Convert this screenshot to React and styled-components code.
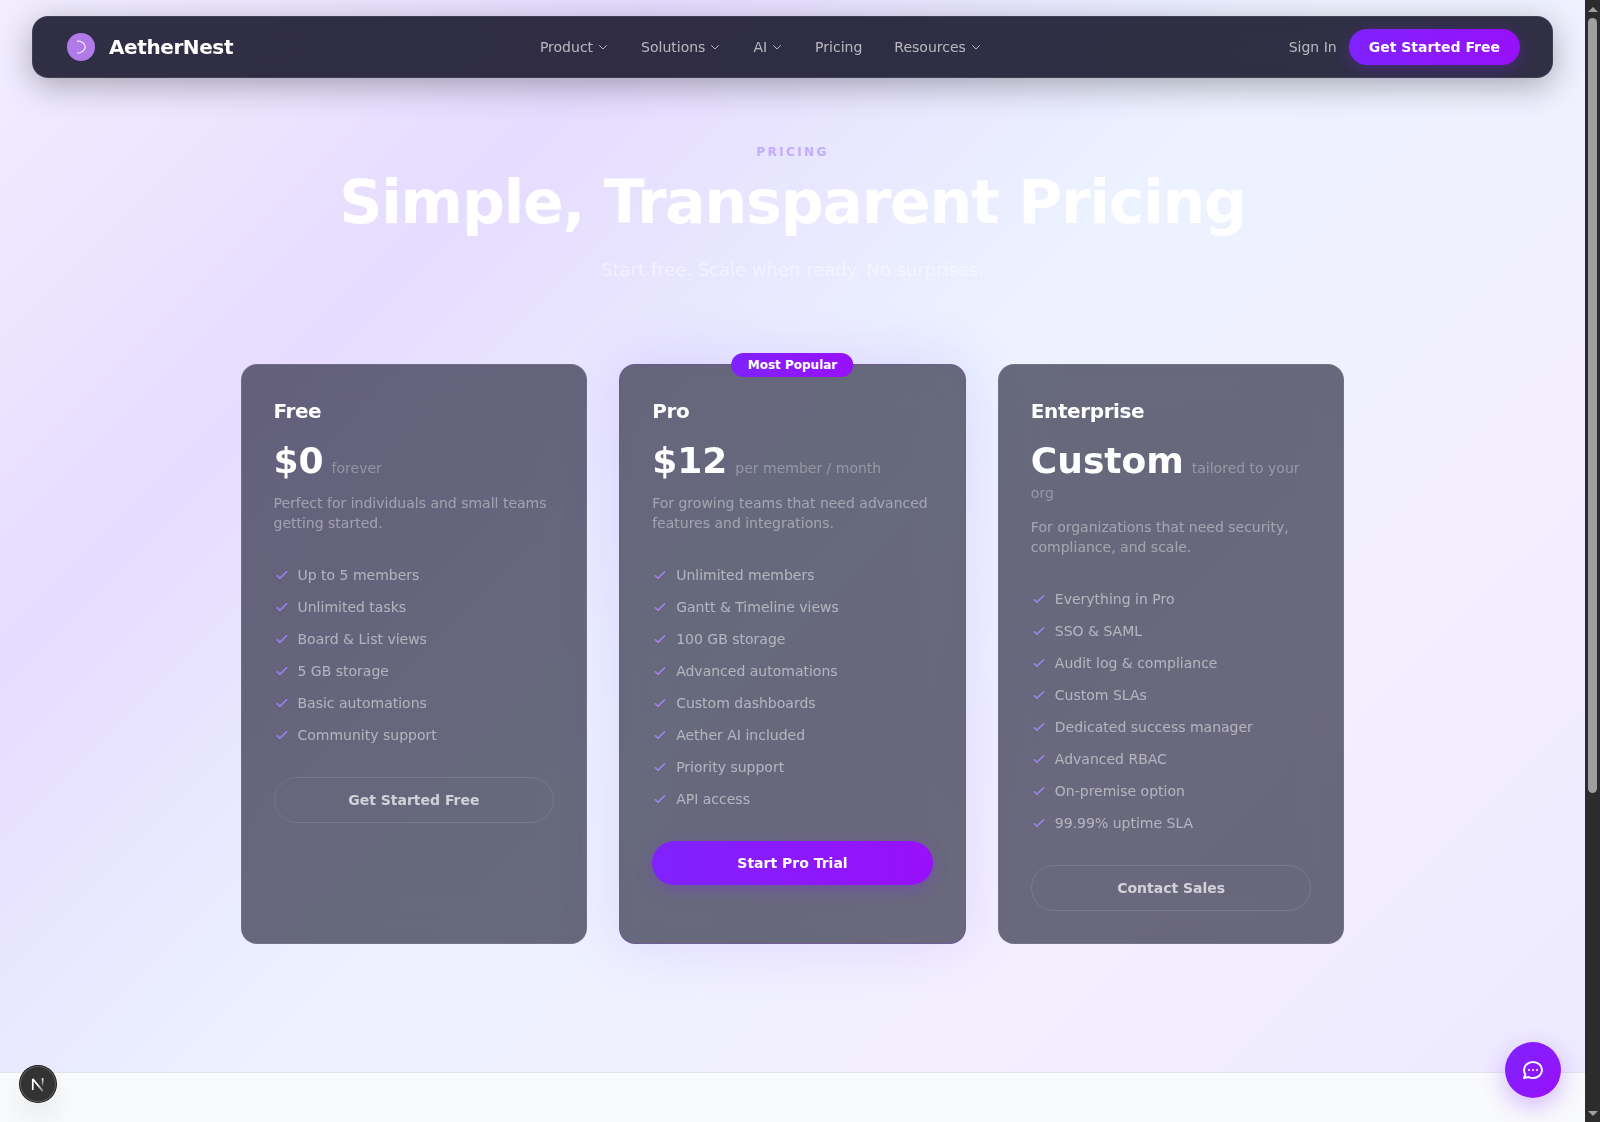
import React from "react";
import styled, { createGlobalStyle, css } from "styled-components";

const GlobalStyle = createGlobalStyle`
  * {
    box-sizing: border-box;
  }

  body {
    margin: 0;
    font-family: "DejaVu Sans", sans-serif;
    font-size: 16px;
    line-height: 24px;
    color: #fff;
  }

  h1, h2, p, ul {
    margin: 0;
    padding: 0;
  }

  ul {
    list-style: none;
  }

  a {
    color: inherit;
    text-decoration: none;
  }

  button {
    font-family: inherit;
    border: none;
    cursor: pointer;
  }
`;

const Shell = styled.div`
  display: flex;
  height: 100vh;
  overflow: hidden;
`;

const Page = styled.div`
  flex: 1;
  min-width: 0;
  display: flex;
  flex-direction: column;
`;

const Hero = styled.main`
  padding: 16px 32px 128px;
  background: linear-gradient(
    135deg,
    #f2eeff 0%,
    #e6dcff 25%,
    #ecf2ff 50%,
    #f4efff 75%,
    #edeaff 100%
  );
`;

const gradient = css`
  background: linear-gradient(90deg, #7f22fe, #9810fa);
`;

const NavBar = styled.header`
  display: flex;
  align-items: center;
  justify-content: space-between;
  padding: 12px 32px;
  border: 1px solid rgba(255, 255, 255, 0.08);
  border-radius: 16px;
  background: rgba(14, 13, 35, 0.85);
  backdrop-filter: blur(20px);
  box-shadow: 0 8px 32px rgba(0, 0, 0, 0.3);
`;

const Brand = styled.a`
  display: flex;
  align-items: center;
  gap: 12px;
  font-size: 20px;
  font-weight: 700;
  line-height: 28px;
  letter-spacing: -0.02em;
`;

const NavLinks = styled.nav`
  display: flex;
  align-items: center;
  gap: 32px;
`;

const NavItem = styled.button`
  display: flex;
  align-items: center;
  gap: 4px;
  padding: 0;
  background: none;
  font-size: 14px;
  line-height: 20px;
  color: rgba(255, 255, 255, 0.65);
`;

const NavActions = styled.div`
  display: flex;
  align-items: center;
  gap: 12px;
`;

const NavLink = styled.a`
  font-size: 14px;
  line-height: 20px;
  color: rgba(255, 255, 255, 0.65);
`;

const NavCta = styled.button`
  ${gradient}
  padding: 8px 20px;
  border-radius: 18px;
  font-size: 14px;
  font-weight: 600;
  line-height: 20px;
  color: #fff;
  box-shadow: 0 4px 16px rgba(127, 34, 254, 0.3);
`;

const Intro = styled.div`
  padding-top: 66px;
  text-align: center;
`;

const Eyebrow = styled.p`
  margin-bottom: 12px;
  font-size: 12px;
  font-weight: 600;
  line-height: 16px;
  letter-spacing: 0.2em;
  text-transform: uppercase;
  color: #c2adff;
`;

const Heading = styled.h1`
  margin-bottom: 24px;
  font-size: 60px;
  font-weight: 700;
  line-height: 60px;
  letter-spacing: -0.02em;
`;

const Subheading = styled.p`
  font-size: 18px;
  line-height: 28px;
  color: rgba(255, 255, 255, 0.5);
`;

const Plans = styled.section`
  display: grid;
  grid-template-columns: repeat(3, 1fr);
  gap: 32px;
  max-width: 1104px;
  margin: 80px auto 0;
`;

const PlanCard = styled.article`
  position: relative;
  padding: 32px;
  border: 1px solid
    ${({ $popular }) =>
      $popular ? "rgba(127, 34, 254, 0.2)" : "rgba(255, 255, 255, 0.08)"};
  border-radius: 16px;
  background: rgba(14, 14, 36, 0.6);
  backdrop-filter: blur(20px);
  box-shadow: ${({ $popular }) =>
    $popular ? "0 0 60px rgba(124, 58, 255, 0.15)" : "none"};
`;

const Badge = styled.span`
  ${gradient}
  position: absolute;
  top: -12px;
  left: 50%;
  transform: translateX(-50%);
  padding: 4px 16px;
  border-radius: 12px;
  font-size: 12px;
  font-weight: 600;
  line-height: 16px;
  white-space: nowrap;
`;

const PlanName = styled.h2`
  margin-bottom: 16px;
  font-size: 20px;
  font-weight: 700;
  line-height: 28px;
  letter-spacing: -0.02em;
`;

const Price = styled.div`
  margin-bottom: 12px;
`;

const Amount = styled.span`
  font-size: 36px;
  font-weight: 700;
  line-height: 40px;
`;

const Period = styled.span`
  margin-left: 8px;
  font-size: 14px;
  line-height: 20px;
  color: rgba(255, 255, 255, 0.3);
`;

const PlanText = styled.p`
  margin-bottom: 32px;
  font-size: 14px;
  line-height: 20px;
  color: rgba(255, 255, 255, 0.4);
`;

const Features = styled.ul`
  display: flex;
  flex-direction: column;
  gap: 12px;
  margin-bottom: 32px;
`;

const Feature = styled.li`
  display: flex;
  align-items: center;
  gap: 8px;
  font-size: 14px;
  line-height: 20px;
  color: rgba(255, 255, 255, 0.5);

  svg {
    flex-shrink: 0;
    color: #a684ff;
  }
`;

const PlanButton = styled.button`
  display: block;
  width: 100%;
  padding: 12px;
  border-radius: 24px;
  font-size: 14px;
  font-weight: 600;
  line-height: 20px;

  ${({ $primary }) =>
    $primary
      ? css`
          ${gradient}
          color: #fff;
          box-shadow: 0 4px 16px rgba(127, 34, 254, 0.3);
        `
      : css`
          background: none;
          border: 1px solid rgba(255, 255, 255, 0.1);
          color: rgba(255, 255, 255, 0.7);
        `}
`;

const Footer = styled.footer`
  flex: 1;
  border-top: 1px solid #e2e4ea;
  background: #f9fafc;
`;

const ChatButton = styled.button`
  position: fixed;
  right: 39px;
  bottom: 24px;
  display: flex;
  align-items: center;
  justify-content: center;
  width: 56px;
  height: 56px;
  padding: 0;
  border-radius: 50%;
  background: linear-gradient(135deg, #7f22fe, #9810fa);
  color: #fff;
  box-shadow: 0 8px 24px rgba(127, 34, 254, 0.3);
`;

const DevButton = styled.button`
  position: fixed;
  left: 20px;
  bottom: 20px;
  width: 36px;
  height: 36px;
  padding: 0;
  border-radius: 50%;
  background: #333;
  box-shadow: 0 0 0 1px #171717, inset 0 0 0 1px #5c5c5c,
    0 16px 32px -8px rgba(0, 0, 0, 0.24);

  svg {
    display: block;
  }
`;

const ScrollRail = styled.div`
  display: flex;
  flex-direction: column;
  width: 15px;
  background: #2c2c2c;
`;

const ScrollArrow = styled.div`
  display: flex;
  align-items: center;
  justify-content: center;
  height: 18px;

  &::before {
    content: "";
    border: 5px solid transparent;
    border-width: ${({ $up }) => ($up ? "0 5px 5px" : "5px 5px 0")};
    border-color: ${({ $up }) =>
      $up ? "transparent transparent #9f9f9f" : "#9f9f9f transparent transparent"};
  }
`;

const ScrollTrack = styled.div`
  flex: 1;
  padding: 0 3px;
`;

const ScrollThumb = styled.div`
  height: 71.4%;
  border-radius: 5px;
  background: #9f9f9f;
`;

const navItems = [
  { label: "Product", menu: true },
  { label: "Solutions", menu: true },
  { label: "AI", menu: true },
  { label: "Pricing" },
  { label: "Resources", menu: true },
];

const plans = [
  {
    name: "Free",
    price: "$0",
    period: "forever",
    text: "Perfect for individuals and small teams getting started.",
    features: [
      "Up to 5 members",
      "Unlimited tasks",
      "Board & List views",
      "5 GB storage",
      "Basic automations",
      "Community support",
    ],
    cta: "Get Started Free",
  },
  {
    name: "Pro",
    price: "$12",
    period: "per member / month",
    text: "For growing teams that need advanced features and integrations.",
    features: [
      "Unlimited members",
      "Gantt & Timeline views",
      "100 GB storage",
      "Advanced automations",
      "Custom dashboards",
      "Aether AI included",
      "Priority support",
      "API access",
    ],
    cta: "Start Pro Trial",
    popular: true,
  },
  {
    name: "Enterprise",
    price: "Custom",
    period: "tailored to your org",
    text: "For organizations that need security, compliance, and scale.",
    features: [
      "Everything in Pro",
      "SSO & SAML",
      "Audit log & compliance",
      "Custom SLAs",
      "Dedicated success manager",
      "Advanced RBAC",
      "On-premise option",
      "99.99% uptime SLA",
    ],
    cta: "Contact Sales",
  },
];

const iconPaths = {
  chevron: "M19 9l-7 7-7-7",
  check: "M5 13l4 4L19 7",
  chat: "M8 12h.01M12 12h.01M16 12h.01M21 12c0 4.418-4.03 8-9 8a9.863 9.863 0 01-4.255-.949L3 20l1.395-3.72C3.512 15.042 3 13.574 3 12c0-4.418 4.03-8 9-8s9 3.582 9 8z",
};

const Icon = ({ name, size }) => (
  <svg
    width={size}
    height={size}
    viewBox="0 0 24 24"
    fill="none"
    stroke="currentColor"
    strokeWidth="2"
    strokeLinecap="round"
    strokeLinejoin="round"
    aria-hidden="true"
  >
    <path d={iconPaths[name]} />
  </svg>
);

const Logo = () => (
  <svg width="32" height="32" viewBox="0 0 32 32" fill="none" aria-hidden="true">
    <circle cx="16" cy="16" r="14" fill="#b07be8" />
    <path
      d="M12 9.8C16.5 9.8 20.3 13 20.3 16S16.5 22.2 12 22.2"
      stroke="#f3e8ff"
      strokeWidth="1.3"
    />
  </svg>
);

const DevMark = () => (
  <svg width="36" height="36" viewBox="0 0 36 36" fill="none" aria-hidden="true">
    <defs>
      <linearGradient id="stem" x1="0" y1="12" x2="0" y2="21" gradientUnits="userSpaceOnUse">
        <stop stopColor="#fff" />
        <stop offset="1" stopColor="#fff" stopOpacity="0" />
      </linearGradient>
      <linearGradient id="slash" x1="18" y1="19" x2="24" y2="26" gradientUnits="userSpaceOnUse">
        <stop stopColor="#fff" />
        <stop offset="1" stopColor="#fff" stopOpacity="0.2" />
      </linearGradient>
    </defs>
    <path
      d="M12.8 24V13L23 25.4"
      stroke="url(#slash)"
      strokeWidth="1.7"
      strokeLinejoin="bevel"
    />
    <path d="M22.6 12.2V21" stroke="url(#stem)" strokeWidth="1.7" />
  </svg>
);

const Plan = ({ plan }) => (
  <PlanCard $popular={plan.popular}>
    {plan.popular && <Badge>Most Popular</Badge>}
    <PlanName>{plan.name}</PlanName>
    <Price>
      <Amount>{plan.price}</Amount>
      <Period>{plan.period}</Period>
    </Price>
    <PlanText>{plan.text}</PlanText>
    <Features>
      {plan.features.map((feature) => (
        <Feature key={feature}>
          <Icon name="check" size={16} />
          {feature}
        </Feature>
      ))}
    </Features>
    <PlanButton type="button" $primary={plan.popular}>
      {plan.cta}
    </PlanButton>
  </PlanCard>
);

const App = () => {
  return (
    <>
      <GlobalStyle />
      <Shell>
        <Page>
          <Hero>
            <NavBar>
              <Brand href="#">
                <Logo />
                AetherNest
              </Brand>
              <NavLinks>
                {navItems.map(({ label, menu }) =>
                  menu ? (
                    <NavItem key={label} type="button">
                      {label}
                      <Icon name="chevron" size={12} />
                    </NavItem>
                  ) : (
                    <NavLink key={label} href="#pricing">
                      {label}
                    </NavLink>
                  )
                )}
              </NavLinks>
              <NavActions>
                <NavLink href="#sign-in">Sign In</NavLink>
                <NavCta type="button">Get Started Free</NavCta>
              </NavActions>
            </NavBar>
            <Intro>
              <Eyebrow>Pricing</Eyebrow>
              <Heading>Simple, Transparent Pricing</Heading>
              <Subheading>Start free. Scale when ready. No surprises.</Subheading>
            </Intro>
            <Plans id="pricing">
              {plans.map((plan) => (
                <Plan key={plan.name} plan={plan} />
              ))}
            </Plans>
          </Hero>
          <Footer />
        </Page>
        <ScrollRail aria-hidden="true">
          <ScrollArrow $up />
          <ScrollTrack>
            <ScrollThumb />
          </ScrollTrack>
          <ScrollArrow />
        </ScrollRail>
      </Shell>
      <ChatButton type="button" aria-label="Open chat">
        <Icon name="chat" size={24} />
      </ChatButton>
      <DevButton type="button" aria-label="Open dev tools">
        <DevMark />
      </DevButton>
    </>
  );
};

export default App;
